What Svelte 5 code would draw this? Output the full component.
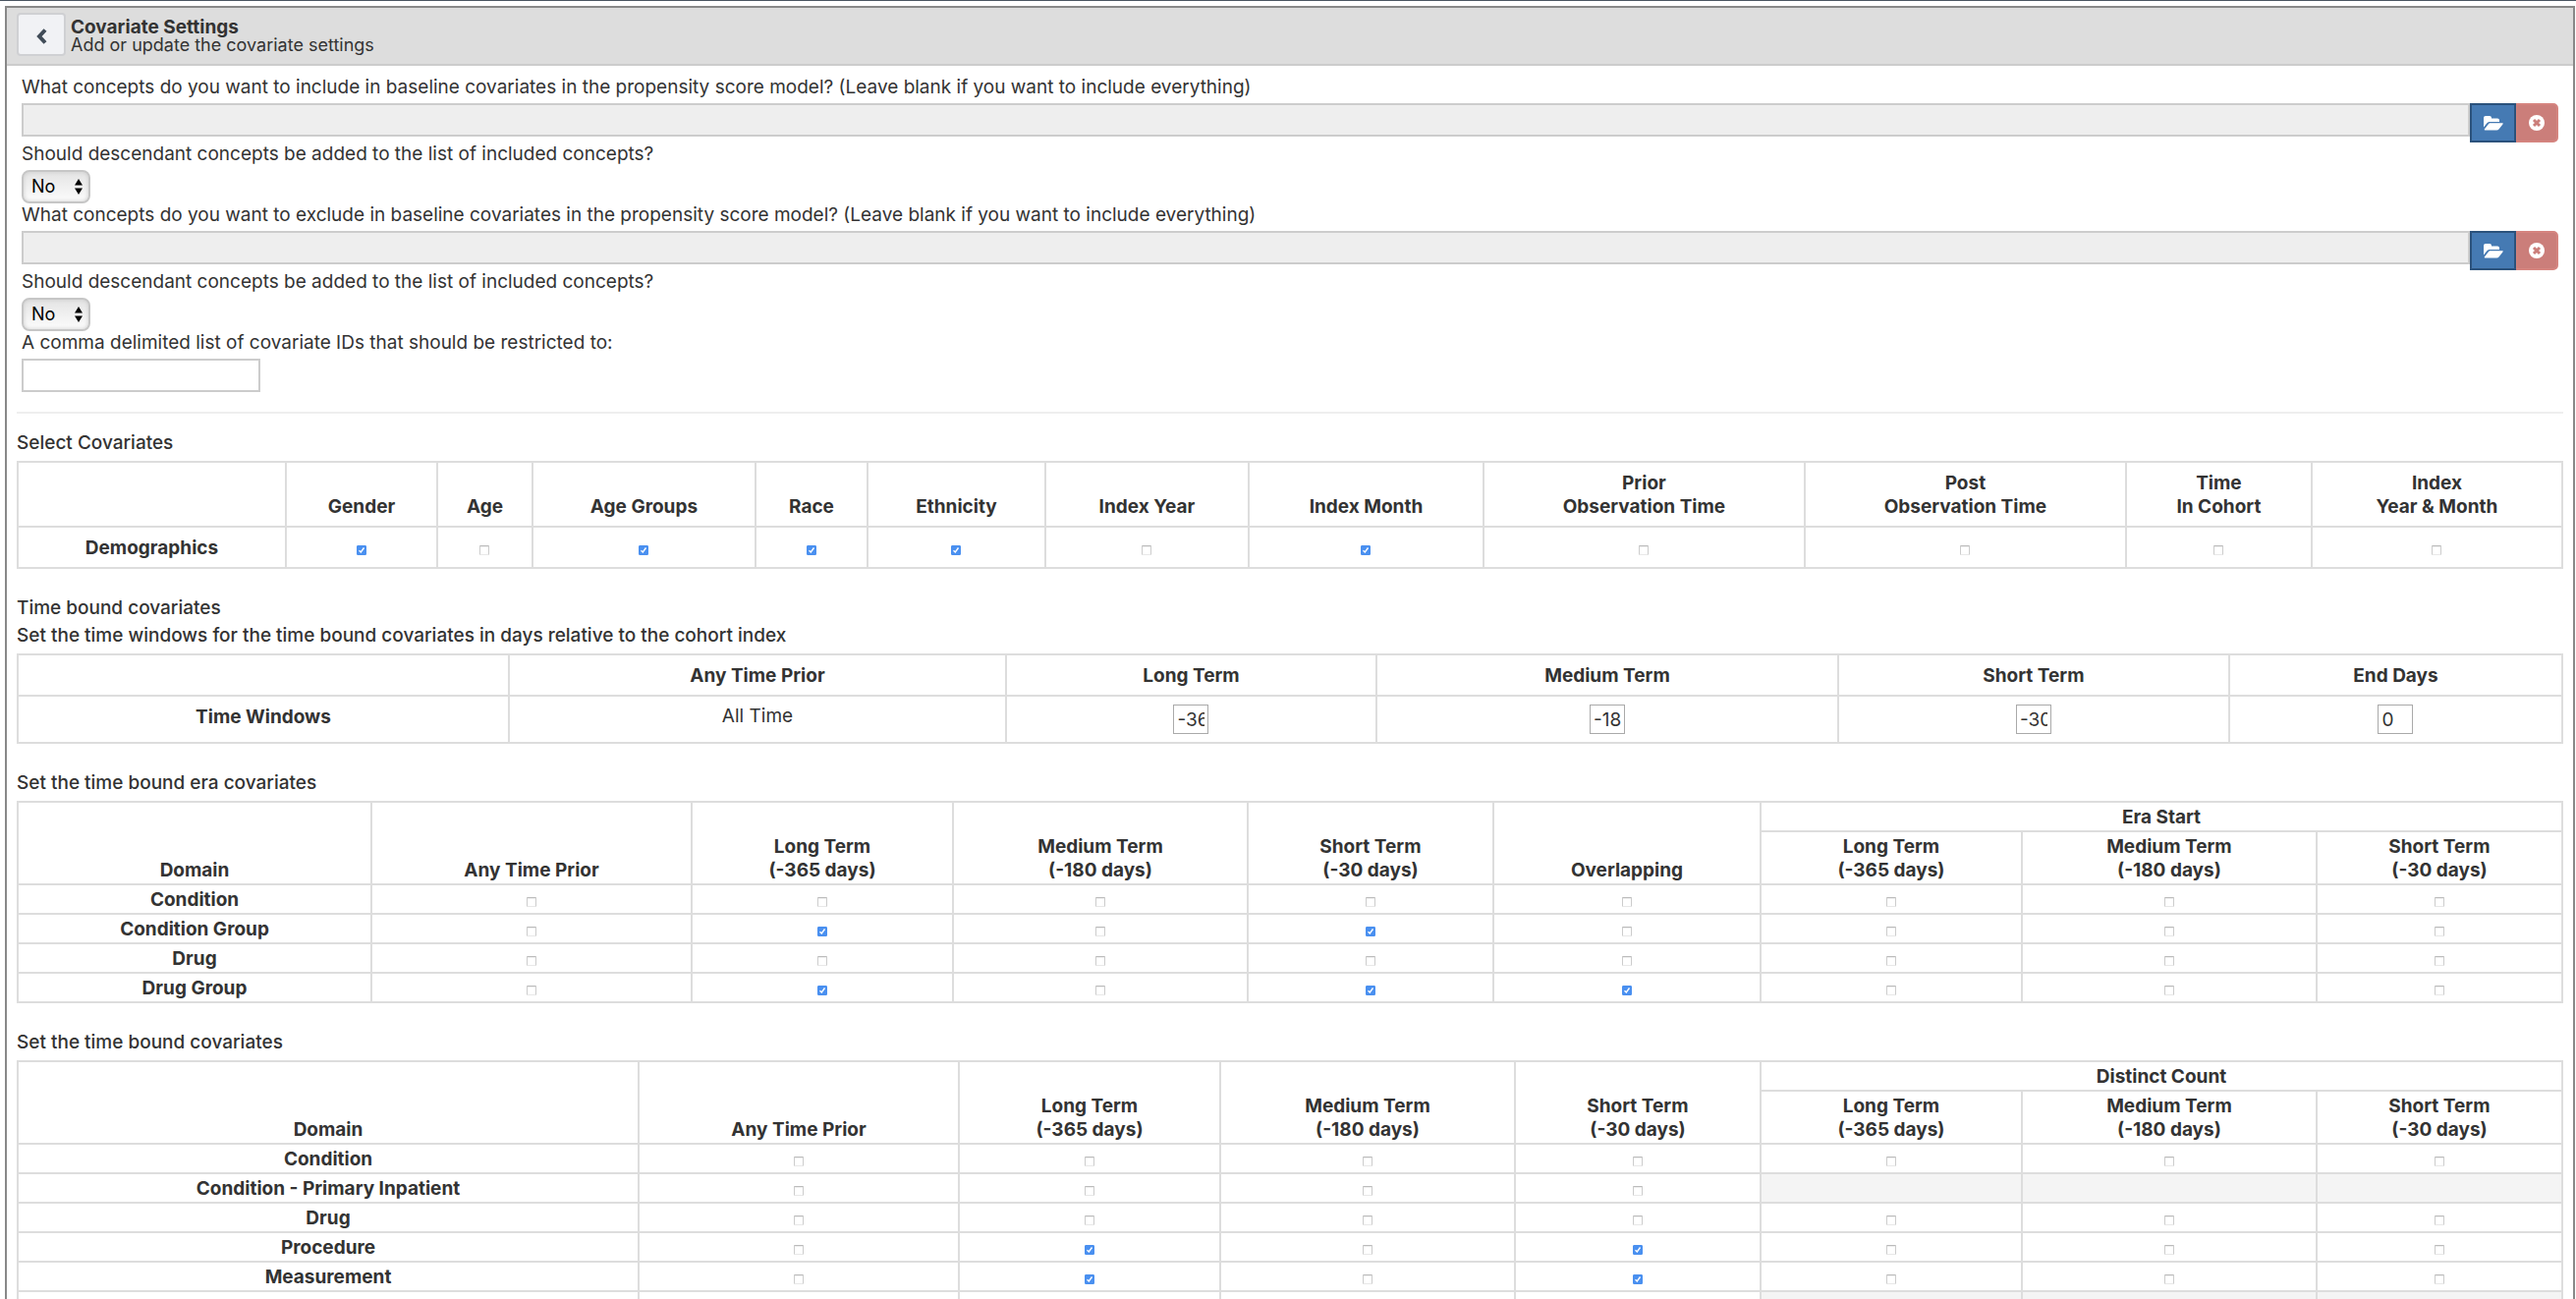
<script>
  const conceptSets = [
    {
      id: 'included',
      question:
        'What concepts do you want to include in baseline covariates in the propensity score model? (Leave blank if you want to include everything)',
      followUp: 'Should descendant concepts be added to the list of included concepts?',
    },
    {
      id: 'excluded',
      question:
        'What concepts do you want to exclude in baseline covariates in the propensity score model? (Leave blank if you want to include everything)',
      followUp: 'Should descendant concepts be added to the list of included concepts?',
    },
  ];

  const demographics = [
    { lines: ['Gender'], width: 154, on: true },
    { lines: ['Age'], width: 97, on: false },
    { lines: ['Age Groups'], width: 227, on: true },
    { lines: ['Race'], width: 114, on: true },
    { lines: ['Ethnicity'], width: 181, on: true },
    { lines: ['Index Year'], width: 207, on: false },
    { lines: ['Index Month'], width: 239, on: true },
    { lines: ['Prior', 'Observation Time'], width: 327, on: false },
    { lines: ['Post', 'Observation Time'], width: 327, on: false },
    { lines: ['Time', 'In Cohort'], width: 189, on: false },
    { lines: ['Index', 'Year & Month'], width: 255, on: false },
  ];

  const windows = [
    { label: 'Long Term', value: '-365', width: 377 },
    { label: 'Medium Term', value: '-180', width: 470 },
    { label: 'Short Term', value: '-30', width: 398 },
    { label: 'End Days', value: '0', width: 339 },
  ];

  const long = { lines: ['Long Term', '(-365 days)'], width: 266 };
  const medium = { lines: ['Medium Term', '(-180 days)'], width: 300 };
  const short = { lines: ['Short Term', '(-30 days)'], width: 250 };
  const anyTime = { lines: ['Any Time Prior'], width: 326 };

  // Cell states: 1 ticked, 0 unticked, null not applicable.
  const grids = [
    {
      title: 'Set the time bound era covariates',
      group: 'Era Start',
      domainWidth: 360,
      columns: [anyTime, long, medium, short, { lines: ['Overlapping'], width: 272 }],
      rows: [
        { label: 'Condition', cells: [0, 0, 0, 0, 0, 0, 0, 0] },
        { label: 'Condition Group', cells: [0, 1, 0, 1, 0, 0, 0, 0] },
        { label: 'Drug', cells: [0, 0, 0, 0, 0, 0, 0, 0] },
        { label: 'Drug Group', cells: [0, 1, 0, 1, 1, 0, 0, 0] },
      ],
    },
    {
      title: 'Set the time bound covariates',
      group: 'Distinct Count',
      domainWidth: 632,
      columns: [anyTime, long, medium, short],
      rows: [
        { label: 'Condition', cells: [0, 0, 0, 0, 0, 0, 0] },
        { label: 'Condition - Primary Inpatient', cells: [0, 0, 0, 0, null, null, null] },
        { label: 'Drug', cells: [0, 0, 0, 0, 0, 0, 0] },
        { label: 'Procedure', cells: [0, 1, 0, 1, 0, 0, 0] },
        { label: 'Measurement', cells: [0, 1, 0, 1, 0, 0, 0] },
        { label: '', cells: [0, 0, 0, 0, null, null, null] },
      ],
    },
  ];
  const groupColumns = [long, medium, short];

  function shares(widths) {
    const total = widths.reduce((a, b) => a + b, 0);
    return widths.map((w) => `${((w / total) * 100).toFixed(3)}%`);
  }
</script>

{#snippet cols(widths)}
  <colgroup>
    {#each shares(widths) as share}
      <col style:width={share} />
    {/each}
  </colgroup>
{/snippet}

{#snippet stacked(lines)}
  {#each lines as line, i}{#if i > 0}<br />{/if}{line}{/each}
{/snippet}

<div class="page">
  <main class="panel">
    <header class="panel-head">
      <button class="back" type="button" aria-label="Back">
        <svg viewBox="0 0 12 18" width="12" height="18" aria-hidden="true">
          <path d="M10 2.500 4 9l6 6.500" fill="none" stroke="#414c58" stroke-width="4" />
        </svg>
      </button>
      <div class="heading">
        <h1>Covariate Settings</h1>
        <p>Add or update the covariate settings</p>
      </div>
    </header>

    <div class="body">
      <form class="questions">
        {#each conceptSets as set}
          <label class="question" for="{set.id}-concepts">{set.question}</label>
          <div class="input-group">
            <input id="{set.id}-concepts" class="concepts" type="text" disabled />
            <button class="open" type="button" aria-label="Open concept set">
              <svg viewBox="0 0 20 15" width="20" height="15" aria-hidden="true">
                <path d="M0 11.500V2C0 .8.8 0 2 0h4c1.200 0 2 .8 2 2v.5h6c1.200 0 2 .8 2 2V6H6.200C5 6 3.900 6.600 3.200 7.400z" fill="#fff" />
                <path d="M19 7.200c.8 0 .9.500.4 1.200l-3.700 4.900c-.6.800-1.500 1.200-2.500 1.200H1.400c-.8 0-1-.5-.4-1.200L4.700 8.500C5.200 7.700 6.100 7.200 7 7.200z" fill="#fff" />
              </svg>
            </button>
            <button class="clear" type="button" aria-label="Clear concept set">
              <svg viewBox="0 0 16 16" width="16" height="16" aria-hidden="true">
                <circle cx="8" cy="8" r="8" fill="#fff" />
                <path d="m5 5 6 6m0-6-6 6" fill="none" stroke="#cb7e7a" stroke-width="3" />
              </svg>
            </button>
          </div>
          <label class="question" for="{set.id}-descendants">{set.followUp}</label>
          <div class="select-box">
            <select id="{set.id}-descendants">
              <option>No</option>
              <option>Yes</option>
            </select>
            <svg class="arrows" viewBox="0 0 8 16" width="8" height="16" aria-hidden="true">
              <path d="M0 6.500 4 0l4 6.500zM0 9.500 4 16l4-6.500z" fill="#000" />
            </svg>
          </div>
        {/each}
        <label class="question" for="covariate-ids">A comma delimited list of covariate IDs that should be restricted to:</label>
        <input id="covariate-ids" class="ids" type="text" />
      </form>

      <hr />

      <section>
        <h2>Select Covariates</h2>
        <table class="roomy">
          {@render cols([273, ...demographics.map((d) => d.width)])}
          <thead>
            <tr>
              <th></th>
              {#each demographics as d}
                <th scope="col">{@render stacked(d.lines)}</th>
              {/each}
            </tr>
          </thead>
          <tbody>
            <tr>
              <th scope="row">Demographics</th>
              {#each demographics as d}
                <td><input type="checkbox" checked={d.on} aria-label={d.lines.join(' ')} /></td>
              {/each}
            </tr>
          </tbody>
        </table>
      </section>

      <section>
        <h2>Time bound covariates</h2>
        <h2>Set the time windows for the time bound covariates in days relative to the cohort index</h2>
        <table class="roomy">
          {@render cols([500, 506, ...windows.map((w) => w.width)])}
          <thead>
            <tr>
              <th></th>
              <th scope="col">Any Time Prior</th>
              {#each windows as w}
                <th scope="col">{w.label}</th>
              {/each}
            </tr>
          </thead>
          <tbody>
            <tr>
              <th scope="row">Time Windows</th>
              <td>All Time</td>
              {#each windows as w}
                <td><input class="days" type="text" value={w.value} aria-label={w.label} /></td>
              {/each}
            </tr>
          </tbody>
        </table>
      </section>

      {#each grids as grid}
        <section>
          <h2>{grid.title}</h2>
          <table>
            {@render cols([grid.domainWidth, ...grid.columns.map((c) => c.width), ...groupColumns.map((c) => c.width)])}
            <thead>
              <tr>
                <th scope="col" rowspan="2">Domain</th>
                {#each grid.columns as c}
                  <th scope="col" rowspan="2">{@render stacked(c.lines)}</th>
                {/each}
                <th scope="colgroup" colspan="3">{grid.group}</th>
              </tr>
              <tr>
                {#each groupColumns as c}
                  <th scope="col">{@render stacked(c.lines)}</th>
                {/each}
              </tr>
            </thead>
            <tbody>
              {#each grid.rows as row}
                <tr>
                  <th scope="row">{row.label}</th>
                  {#each row.cells as cell, i}
                    <td class:na={cell === null}>
                      {#if cell !== null}
                        <input
                          type="checkbox"
                          checked={cell === 1}
                          aria-label="{row.label}, {[...grid.columns, ...groupColumns][i].lines.join(' ')}"
                        />
                      {/if}
                    </td>
                  {/each}
                </tr>
              {/each}
            </tbody>
          </table>
        </section>
      {/each}
    </div>
  </main>
</div>

<style>
  :global(body) {
    margin: 0;
    background: #fff;
  }

  .page,
  .page * {
    box-sizing: border-box;
  }

  .page {
    height: 100vh;
    overflow: hidden;
    padding: 5px 1px 0 5px;
    border-top: 1px solid #4a5561;
    color: #333;
    font-family: Inter, 'Liberation Sans', sans-serif;
    font-size: 19px;
    line-height: 24px;
  }

  .panel {
    border: 2px solid #888;
  }

  .panel-head {
    display: flex;
    gap: 5px;
    padding: 5px 10px 8px;
    border-bottom: 2px solid #ccc;
    background: #ddd;
  }

  .back {
    display: flex;
    align-items: center;
    justify-content: center;
    width: 50px;
    height: 44px;
    padding: 3px 0 0;
    border: 2px solid #cfd0d3;
    border-radius: 4px;
    background: #f1f2f5;
  }

  .heading {
    padding-top: 6px;
    line-height: 18px;
  }

  h1,
  h2 {
    margin: 0;
    font-size: 19px;
  }

  h1 {
    font-weight: 700;
    line-height: 18px;
  }

  p {
    margin: 0;
    font-size: 18px;
  }

  .body {
    padding: 10px 10px 0;
  }

  .questions {
    display: flex;
    flex-direction: column;
    align-items: flex-start;
    padding: 0 5px;
  }

  .question {
    padding-bottom: 4px;
  }

  .input-group {
    display: flex;
    align-items: flex-start;
    width: 100%;
    height: 40px;
  }

  .concepts {
    flex: 1;
    height: 34px;
    border: 2px solid #ccc;
    background: #eee;
  }

  .open,
  .clear {
    display: flex;
    align-items: center;
    justify-content: center;
    height: 40px;
    padding: 0;
  }

  .open {
    width: 47px;
    border: 2px solid #2b527c;
    background: #457ab3;
  }

  .clear {
    width: 43px;
    border: 2px solid #d5847f;
    border-left-width: 1px;
    border-radius: 0 5px 5px 0;
    background: #cb7e7a;
  }

  .select-box {
    display: grid;
    align-items: center;
    width: 70px;
    height: 34px;
  }

  select {
    grid-area: 1 / 1;
    width: 70px;
    height: 34px;
    padding: 0 8px;
    border: 2px solid #c6c6c6;
    border-radius: 8px;
    background: linear-gradient(#e4e4e4, #fcfcfc);
    box-shadow: inset 0 0 4px #ccc;
    color: #000;
    font: inherit;
    font-size: 18px;
    appearance: none;
  }

  .arrows {
    grid-area: 1 / 1;
    justify-self: end;
    margin-right: 8px;
    pointer-events: none;
  }

  .ids {
    width: 243px;
    height: 34px;
    border: 2px solid #ccc;
    background: #fff;
  }

  hr {
    margin: 20px 0 18px;
    border: 0;
    border-top: 2px solid #eee;
  }

  section {
    margin-bottom: 28px;
  }

  h2 {
    margin-bottom: 4px;
    font-weight: 500;
  }

  table {
    width: 100%;
    margin-top: 6px;
    border-collapse: collapse;
    table-layout: fixed;
  }

  th,
  td {
    padding: 2px;
    border: 2px solid #ddd;
    text-align: center;
    vertical-align: top;
  }

  th {
    height: 30px;
    padding: 3px 2px 1px;
    font-weight: 700;
  }

  thead th {
    vertical-align: bottom;
  }

  .roomy th {
    padding: 9px 8px 7px;
  }

  .roomy td {
    padding: 8px;
  }

  .na {
    background: #f4f4f4;
  }

  input[type='checkbox'] {
    display: block;
    width: 10px;
    height: 10px;
    margin: 10px auto 0;
    border: 1px solid #ccc;
    border-top-color: #bbb;
    border-bottom-color: #e8e8e8;
    border-radius: 1px;
    background: #fff;
    box-shadow: inset 0 1px #eee;
    appearance: none;
  }

  input[type='checkbox']:checked {
    border-color: #4a90f0;
    background: #4a90f0
      url("data:image/svg+xml,%3Csvg xmlns='http://www.w3.org/2000/svg' viewBox='0 0 8 8'%3E%3Cpath d='M1.500 4.200 3.300 6 6.500 1.500' fill='none' stroke='white' stroke-width='1.400'/%3E%3C/svg%3E");
    box-shadow: none;
  }

  .days {
    display: block;
    width: 36px;
    height: 30px;
    margin: 0 auto;
    padding: 0 3px;
    border: 1px solid #aaa;
    background: #fff;
    color: #333;
    font: inherit;
  }
</style>
